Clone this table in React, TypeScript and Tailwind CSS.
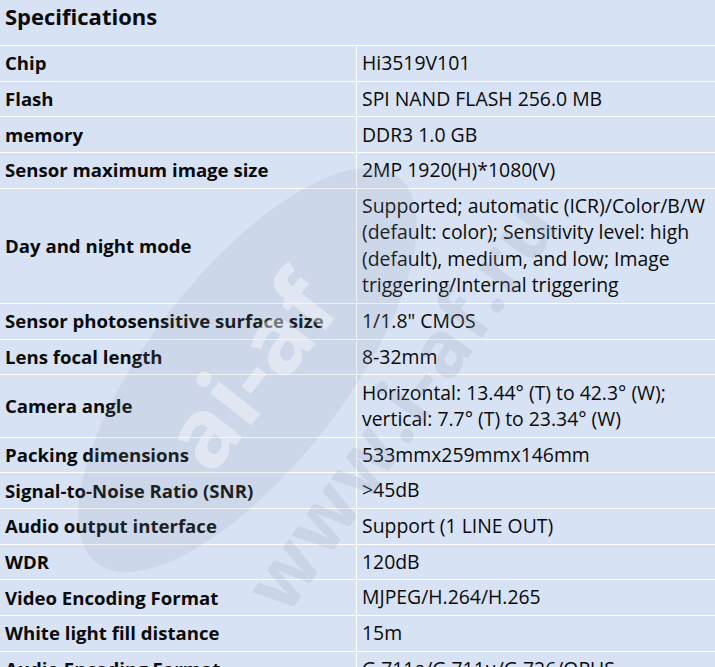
import React from "react";

const rows: [string, string[]][] = [
  ["Chip", ["Hi3519V101"]],
  ["Flash", ["SPI NAND FLASH 256.0 MB"]],
  ["memory", ["DDR3 1.0 GB"]],
  ["Sensor maximum image size", ["2MP 1920(H)*1080(V)"]],
  [
    "Day and night mode",
    [
      "Supported; automatic (ICR)/Color/B/W",
      "(default: color); Sensitivity level: high",
      "(default), medium, and low; Image",
      "triggering/Internal triggering",
    ],
  ],
  ["Sensor photosensitive surface size", ['1/1.8" CMOS']],
  ["Lens focal length", ["8-32mm"]],
  ["Camera angle", ["Horizontal: 13.44° (T) to 42.3° (W);", "vertical: 7.7° (T) to 23.34° (W)"]],
  ["Packing dimensions", ["533mmx259mmx146mm"]],
  ["Signal-to-Noise Ratio (SNR)", [">45dB"]],
  ["Audio output interface", ["Support (1 LINE OUT)"]],
  ["WDR", ["120dB"]],
  ["Video Encoding Format", ["MJPEG/H.264/H.265"]],
  ["White light fill distance", ["15m"]],
  ["Audio Encoding Format", ["G.711a/G.711u/G.726/OPUS"]],
];

export default function App() {
  return (
    <div
      className="relative w-[715px] h-[667px] overflow-hidden bg-[#d7e3f4] text-[#0a0a0a]"
      style={{ fontFamily: '"Open Sans", "Noto Sans", sans-serif' }}
    >
      <div className="h-[46px] flex items-center pl-[5px] pb-[12px] text-[22px] font-bold border-b border-white">
        Specifications
      </div>
      <div className="flex flex-col">
        {rows.map(([k, v]) => (
          <div key={k} className="flex border-b border-white">
            <div className="w-[357px] shrink-0 flex items-center pl-[5px] text-[18.6px] font-bold border-r border-white whitespace-nowrap">
              {k}
            </div>
            <div className="flex-1 pl-[5px] pt-[4.2px] pb-[4px] text-[19.4px] leading-[26.5px] whitespace-nowrap">
              {v.map((l) => (
                <div key={l}>{l}</div>
              ))}
            </div>
          </div>
        ))}
      </div>

      {/* watermark */}
      <div className="pointer-events-none absolute left-[150px] top-[125px] w-[195px] h-[490px] rounded-[50%] bg-[#8f9bb0]/15 rotate-[38deg] flex items-center justify-center">
        <span className="-rotate-[90deg] text-[96px] font-bold text-white/40 whitespace-nowrap">ai-af</span>
      </div>
      <div className="pointer-events-none absolute left-[120px] top-[345px] w-[560px] flex justify-center -rotate-[55deg]">
        <span className="text-[78px] font-bold text-[#8f9bb0]/20 whitespace-nowrap tracking-[2px]">www.i-af.ru</span>
      </div>
    </div>
  );
}
